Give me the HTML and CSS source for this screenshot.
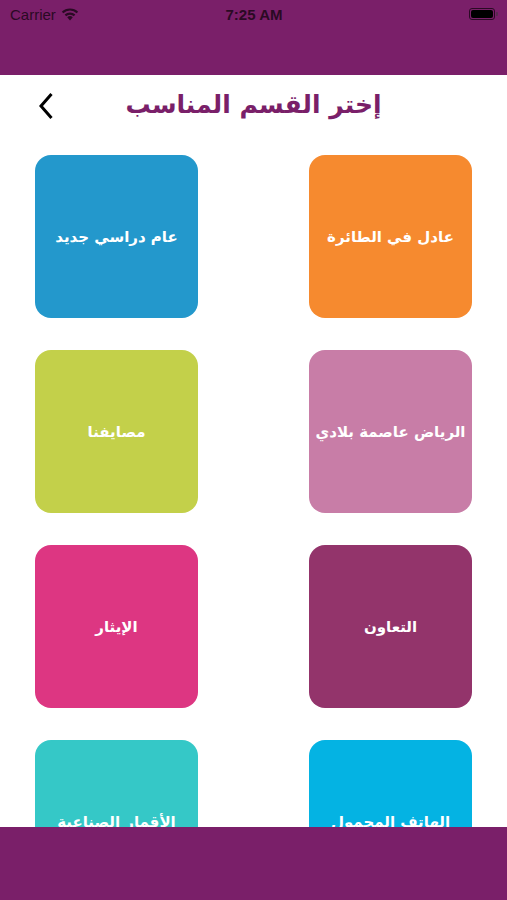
FILE: index.html
```html
<!DOCTYPE html>
<html lang="ar">
<head>
    <meta charset="UTF-8">
    <meta name="viewport" content="width=device-width, initial-scale=1.0">
    <title>إختر القسم المناسب</title>
    <link rel="stylesheet" href="styles.css">
</head>
<body>
    <div class="screen">
        <div class="top-bar">
            <div class="status-bar">
                <div class="status-left">
                    <span>Carrier</span>
                    <svg class="wifi" width="18" height="13" viewBox="0 0 18 13">
                        <path d="M9 12.5 L6.2 9.3 A4.2 4.2 0 0 1 11.8 9.3 Z" fill="#2a0a24"/>
                        <path d="M4.4 7.4 A6.8 6.8 0 0 1 13.6 7.4" fill="none" stroke="#2a0a24" stroke-width="2.2"/>
                        <path d="M1.6 4.5 A10.6 10.6 0 0 1 16.4 4.5" fill="none" stroke="#2a0a24" stroke-width="2.2"/>
                    </svg>
                </div>
                <div class="status-time">7:25 AM</div>
                <div class="status-right">
                    <div class="battery"><div class="battery-fill"></div></div>
                    <div class="battery-tip"></div>
                </div>
            </div>
        </div>

        <div class="header">
            <svg class="back" width="16" height="28" viewBox="0 0 16 28">
                <path d="M13.5 2 L3 14 L13.5 26" fill="none" stroke="#000" stroke-width="3"/>
            </svg>
            <h1>إختر القسم المناسب</h1>
        </div>

        <div class="content">
            <div class="grid">
                <div class="tile orange">عادل في الطائرة</div>
                <div class="tile blue">عام دراسي جديد</div>
                <div class="tile pink">الرياض عاصمة بلادي</div>
                <div class="tile lime">مصايفنا</div>
                <div class="tile plum">التعاون</div>
                <div class="tile magenta">الإيثار</div>
                <div class="tile cyan">الهاتف المحمول</div>
                <div class="tile teal">الأقمار الصناعية</div>
            </div>
        </div>

        <div class="bottom-bar"></div>
    </div>
</body>
</html>
```

FILE: styles.css
```css
body {
    margin: 0;
    padding: 0;
    font-family: "DejaVu Sans", "Noto Sans", sans-serif;
    background-color: #fff;
}
.screen {
    height: 900px;
    display: flex;
    flex-direction: column;
    overflow: hidden;
}
.top-bar {
    height: 75px;
    background-color: #7a1f69;
    flex-shrink: 0;
}
.status-bar {
    height: 28px;
    display: flex;
    align-items: center;
    justify-content: space-between;
    padding: 0 9px 0 10px;
    font-family: "Liberation Sans", Arial, sans-serif;
    font-size: 15px;
    color: #2a0a24;
}
.status-left {
    display: flex;
    align-items: center;
    gap: 5px;
    width: 120px;
}
.status-time {
    font-weight: bold;
}
.status-right {
    width: 120px;
    display: flex;
    justify-content: flex-end;
    align-items: center;
}
.battery {
    width: 22px;
    height: 8px;
    border: 1px solid #2a0a24;
    border-radius: 3px;
    padding: 1px;
}
.battery-fill {
    width: 100%;
    height: 100%;
    background-color: #000;
    border-radius: 2px;
}
.battery-tip {
    width: 2px;
    height: 4px;
    background-color: #5a2a50;
    margin-left: 1px;
    border-radius: 0 1px 1px 0;
}
.header {
    height: 60px;
    display: flex;
    align-items: center;
    justify-content: center;
    position: relative;
    flex-shrink: 0;
}
.header h1 {
    margin: 0;
    font-size: 25px;
    font-weight: bold;
    color: #7a1f69;
    direction: rtl;
    padding-bottom: 2px;
}
.back {
    position: absolute;
    left: 38px;
    top: 17px;
}
.content {
    flex: 1;
    overflow: hidden;
    padding: 20px 35px 0;
}
.grid {
    direction: rtl;
    display: grid;
    grid-template-columns: 163px 163px;
    justify-content: space-between;
    row-gap: 32px;
}
.tile {
    height: 163px;
    border-radius: 16px;
    display: flex;
    align-items: center;
    justify-content: center;
    text-align: center;
    color: #fff;
    font-size: 15px;
    font-weight: bold;
    white-space: nowrap;
}
.orange { background-color: #f68a2f; }
.blue { background-color: #2398cc; }
.pink { background-color: #c87da7; }
.lime { background-color: #c3d04a; }
.plum { background-color: #93346b; }
.magenta { background-color: #dd3682; }
.cyan { background-color: #04b3e3; }
.teal { background-color: #35c8c7; }
.bottom-bar {
    height: 73px;
    background-color: #7a1f69;
    flex-shrink: 0;
}
```
